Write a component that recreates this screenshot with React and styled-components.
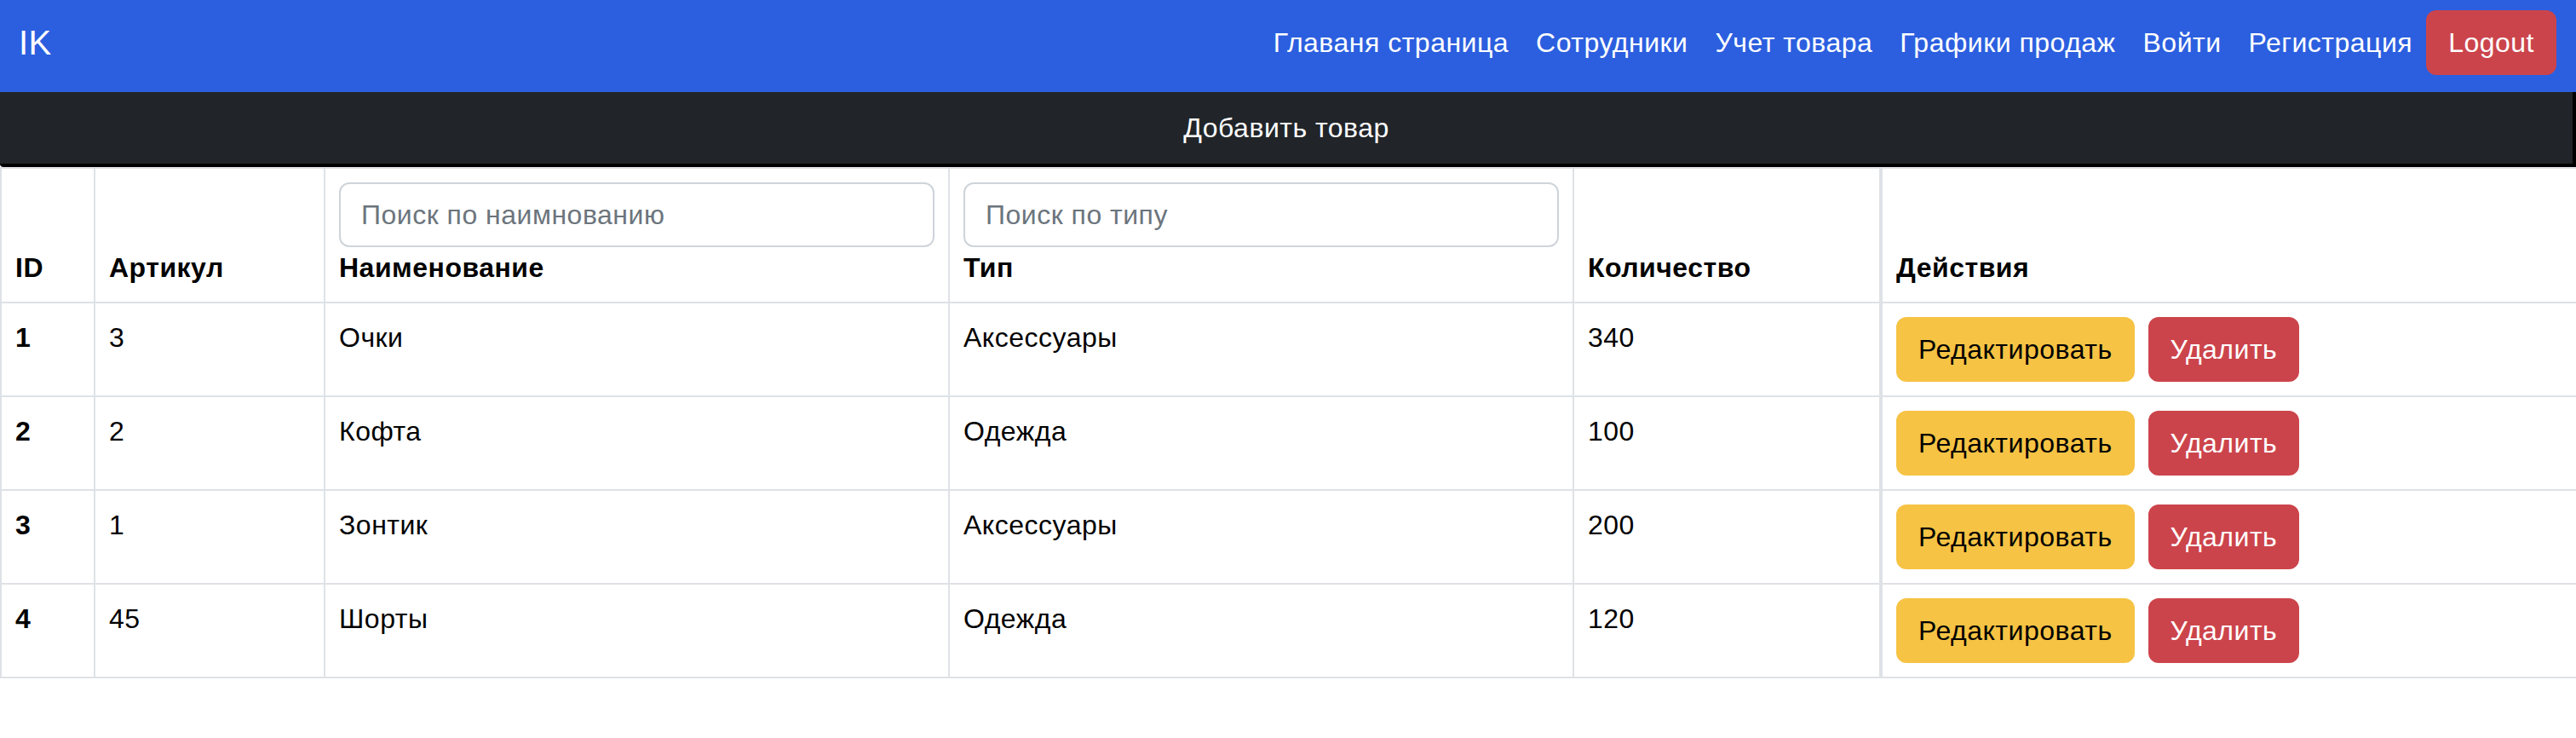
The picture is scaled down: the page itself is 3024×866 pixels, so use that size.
import styled, { createGlobalStyle } from 'styled-components';

const GlobalStyle = createGlobalStyle`
	html, body {
		margin: 0;
		padding: 0;
		background: #fff;
	}
	body {
		font-family: "Liberation Sans", Arial, sans-serif;
		font-size: 32px;
		line-height: 1.5;
		letter-spacing: 0.5px;
		color: #000;
	}
	* {
		box-sizing: border-box;
	}
`;

const goods = [
	{ id: 1, article: '3', name: 'Очки', type: 'Аксессуары', count: 340 },
	{ id: 2, article: '2', name: 'Кофта', type: 'Одежда', count: 100 },
	{ id: 3, article: '1', name: 'Зонтик', type: 'Аксессуары', count: 200 },
	{ id: 4, article: '45', name: 'Шорты', type: 'Одежда', count: 120 },
];

const links = ['Главаня страница', 'Сотрудники', 'Учет товара', 'Графики продаж', 'Войти', 'Регистрация'];

// column widths taken from the screenshot
const widths = [110, 270, 733, 733, 361, 817];

const Navbar = styled.nav`
	display: flex;
	align-items: center;
	justify-content: space-between;
	height: 108px;
	padding: 10px 23px 18px 22px;
	background: #2c5fdf;
`;

const Brand = styled.a`
	padding: 10px 0;
	font-size: 40px;
	line-height: 60px;
	color: #fff;
	text-decoration: none;
`;

const NavList = styled.div`
	display: flex;
	align-items: center;
`;

const NavLink = styled.a`
	padding: 16px;
	line-height: 48px;
	color: #fff;
	text-decoration: none;
	white-space: nowrap;
`;

const Button = styled.button`
	font-family: inherit;
	font-size: 32px;
	line-height: 48px;
	letter-spacing: inherit;
	padding: 12px 24px;
	border: 2px solid ${(p) => p.$bg};
	border-radius: 12px;
	background: ${(p) => p.$bg};
	color: ${(p) => p.$fg};
	margin-right: ${(p) => (p.$gap ? '16px' : '0')};
	cursor: pointer;
	white-space: nowrap;
`;

const AddBar = styled.button`
	display: block;
	width: 100%;
	height: 88px;
	padding: 0;
	font-family: inherit;
	font-size: 32px;
	line-height: 48px;
	letter-spacing: inherit;
	color: #fff;
	background: #212529;
	border: none;
	border-right: 4px solid #000;
	border-bottom: 4px solid #000;
	border-bottom-left-radius: 4px;
	cursor: pointer;
`;

const Table = styled.table`
	width: 3024px;
	table-layout: fixed;
	border-collapse: collapse;
	border: 2px solid #dee2e6;
`;

const HeadCell = styled.th`
	padding: 16px;
	text-align: left;
	vertical-align: bottom;
	font-weight: 700;
	border: 2px solid #dee2e6;
	border-left-width: ${(p) => (p.$thick ? '4px' : '2px')};
`;

const Cell = styled.td`
	padding: 16px;
	vertical-align: top;
	font-weight: ${(p) => (p.$bold ? 700 : 400)};
	border: 2px solid #dee2e6;
	border-left-width: ${(p) => (p.$thick ? '4px' : '2px')};
	white-space: nowrap;
`;

const Search = styled.input`
	display: block;
	width: 100%;
	height: 76px;
	padding: 12px 24px;
	font-family: inherit;
	font-size: 32px;
	line-height: 48px;
	letter-spacing: inherit;
	color: #212529;
	border: 2px solid #ced4da;
	border-radius: 12px;
	outline: none;

	&::placeholder {
		color: #6c757d;
	}
`;

const App = () => {
	return (
		<>
			<GlobalStyle />
			<Navbar>
				<Brand href="#">IK</Brand>
				<NavList>
					{links.map((l) => (
						<NavLink key={l} href="#">
							{l}
						</NavLink>
					))}
					<Button $bg="#cc444b" $fg="#fff">
						Logout
					</Button>
				</NavList>
			</Navbar>
			<AddBar>Добавить товар</AddBar>
			<Table>
				<colgroup>
					{widths.map((w, i) => (
						<col key={i} style={{ width: w }} />
					))}
				</colgroup>
				<thead>
					<tr>
						<HeadCell>ID</HeadCell>
						<HeadCell>Артикул</HeadCell>
						<HeadCell>
							<Search placeholder="Поиск по наимнованию" />
							Наименование
						</HeadCell>
						<HeadCell>
							<Search placeholder="Поиск по типу" />
							Тип
						</HeadCell>
						<HeadCell>Количество</HeadCell>
						<HeadCell $thick>Действия</HeadCell>
					</tr>
				</thead>
				<tbody>
					{goods.map((g) => (
						<tr key={g.id}>
							<Cell $bold>{g.id}</Cell>
							<Cell>{g.article}</Cell>
							<Cell>{g.name}</Cell>
							<Cell>{g.type}</Cell>
							<Cell>{g.count}</Cell>
							<Cell $thick>
								<Button $bg="#f6c344" $fg="#000" $gap>
									Редактировать
								</Button>
								<Button $bg="#cc444b" $fg="#fff">
									Удалить
								</Button>
							</Cell>
						</tr>
					))}
				</tbody>
			</Table>
		</>
	);
};

export default App;
